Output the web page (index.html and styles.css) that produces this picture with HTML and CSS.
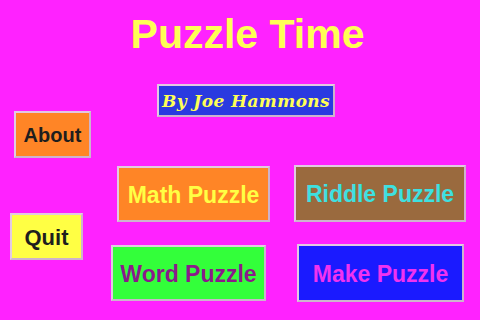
FILE: index.html
```html
<!DOCTYPE html>
<html>
<head>
<meta charset="utf-8">
<link rel="stylesheet" href="styles.css">
</head>
<body>
<div class="page">
  <h1 class="title">Puzzle Time</h1>
  <div class="btn byline">By Joe Hammons</div>
  <div class="btn about">About</div>
  <div class="btn math">Math Puzzle</div>
  <div class="btn riddle">Riddle Puzzle</div>
  <div class="btn quit">Quit</div>
  <div class="btn word">Word Puzzle</div>
  <div class="btn make">Make Puzzle</div>
</div>
</body>
</html>
```
FILE: styles.css
```css
html, body {
  margin: 0;
  padding: 0;
  background: #ff22ff;
}
.page {
  width: 480px;
  height: 320px;
  display: grid;
  grid-template-columns: 104px 180px 196px;
  grid-template-rows: 84px 81px 79px 76px;
  font-family: "Liberation Sans", Arial, sans-serif;
  font-weight: bold;
}
.title {
  grid-column: 1 / 4;
  grid-row: 1;
  margin: 14px 0 0 15px;
  font-size: 41px;
  line-height: 40px;
  color: #ffff55;
  text-align: center;
  font-weight: bold;
}
.btn {
  box-sizing: border-box;
  display: flex;
  align-items: center;
  justify-content: center;
  border: 2px solid #e2c9e2;
  border-right-color: #cdb3cd;
  border-bottom-color: #cdb3cd;
  align-self: start;
  justify-self: start;
  white-space: nowrap;
  padding-top: 2px;
}
.byline {
  grid-column: 1 / 4;
  grid-row: 2;
  margin-left: 157px;
  width: 178px;
  height: 33px;
  background: #2a3ae0;
  color: #ffff55;
  font-family: "DejaVu Serif", serif;
  font-style: italic;
  font-weight: bold;
  font-size: 17px;
  letter-spacing: 0.4px;
  padding-top: 0;
}
.about {
  grid-column: 1;
  grid-row: 2;
  margin: 27px 0 0 14px;
  width: 77px;
  height: 47px;
  background: #ff8526;
  color: #1e1e1e;
  font-size: 20px;
}
.quit {
  grid-column: 1;
  grid-row: 3 / 5;
  margin: 48px 0 0 10px;
  width: 73px;
  height: 47px;
  background: #ffff44;
  color: #1e1e1e;
  font-size: 22px;
}
.math {
  grid-column: 2;
  grid-row: 3;
  margin: 1px 0 0 13px;
  width: 153px;
  height: 56px;
  background: #ff8526;
  color: #ffff44;
  font-size: 23px;
}
.riddle {
  grid-column: 3;
  grid-row: 3;
  margin: 0 0 0 10px;
  width: 172px;
  height: 57px;
  background: #9a6a3e;
  color: #3ee0e0;
  font-size: 23px;
}
.word {
  grid-column: 2;
  grid-row: 4;
  margin: 1px 0 0 7px;
  width: 155px;
  height: 56px;
  background: #33ff3a;
  color: #8a1a8a;
  font-size: 23px;
}
.make {
  grid-column: 3;
  grid-row: 4;
  margin: 0 0 0 13px;
  width: 167px;
  height: 58px;
  background: #1a1aff;
  color: #f032f0;
  font-size: 23px;
}
```
